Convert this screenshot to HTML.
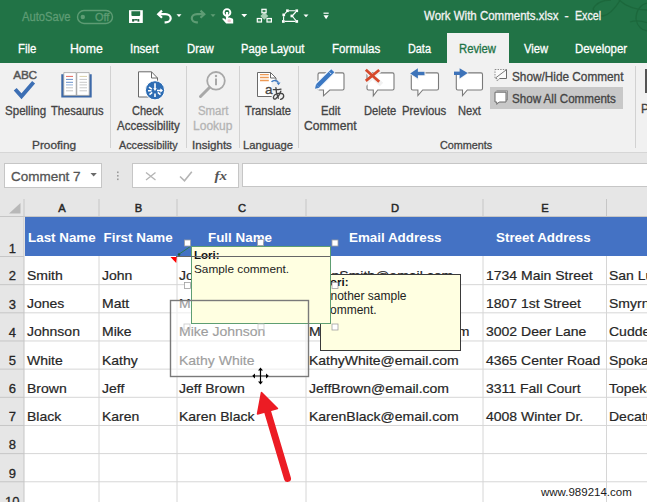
<!DOCTYPE html>
<html><head><meta charset="utf-8">
<style>
html,body{margin:0;padding:0;}
body{width:647px;height:502px;position:relative;overflow:hidden;background:#fff;font-family:"Liberation Sans",sans-serif;}
.a{position:absolute;}
.t{position:absolute;white-space:pre;font-family:"Liberation Sans",sans-serif;}
svg{position:absolute;left:0;top:0;overflow:visible;}
</style></head><body>
<!-- green title/tab bar -->
<div class="a" style="left:0;top:0;width:647px;height:63px;background:#217346;"></div>
<div class="a" style="left:447px;top:33px;width:62px;height:30px;background:#f1f1f1;"></div>
<!-- ribbon -->
<div class="a" style="left:0;top:63px;width:647px;height:89px;background:#f1f1f1;"></div>
<div class="a" style="left:0;top:152px;width:647px;height:64px;background:#e6e6e6;"></div>
<div class="a" style="left:0;top:152px;width:647px;height:1px;background:#d6d6d6;"></div>
<!-- group separators -->
<div class="a" style="left:110px;top:66px;width:1px;height:82px;background:#d2d2d2;"></div>
<div class="a" style="left:186px;top:66px;width:1px;height:82px;background:#d2d2d2;"></div>
<div class="a" style="left:239px;top:66px;width:1px;height:82px;background:#d2d2d2;"></div>
<div class="a" style="left:298px;top:66px;width:1px;height:82px;background:#d2d2d2;"></div>
<div class="a" style="left:635px;top:66px;width:1px;height:82px;background:#d2d2d2;"></div>
<!-- show all comments highlight -->
<div class="a" style="left:490px;top:87px;width:133px;height:22px;background:#c8c8c8;"></div>
<!-- formula bar -->
<div class="a" style="left:4px;top:163px;width:98px;height:25px;background:#fff;border:1px solid #c6c6c6;box-sizing:border-box;"></div>
<div class="a" style="left:132px;top:163px;width:107px;height:25px;background:#fff;border:1px solid #c6c6c6;box-sizing:border-box;"></div>
<div class="a" style="left:242px;top:163px;width:410px;height:24px;background:#fff;border:1px solid #c6c6c6;box-sizing:border-box;"></div>
<!-- grid -->
<div class="a" style="left:24px;top:216px;width:623px;height:286px;background:#fff;"></div>
<div class="a" style="left:0;top:216px;width:24px;height:286px;background:#e6e6e6;"></div>
<div class="a" style="left:24.5px;top:216.5px;width:622.5px;height:39.8px;background:#4472c4;"></div>
<svg width="647" height="502">
<g stroke="#d6d6d6" stroke-width="1" fill="none">
<path d="M24 284.66H647 M24 312.82H647 M24 340.98H647 M24 369.14H647 M24 397.30H647 M24 425.46H647 M24 453.62H647 M24 481.78H647"/>
<path d="M99 256V502 M177 256V502 M306 256V502 M483 256V502 M606.5 256V502"/>
</g>
<g stroke="#c6c6c6" stroke-width="1" fill="none">
<path d="M0 256.50H24 M0 284.66H24 M0 312.82H24 M0 340.98H24 M0 369.14H24 M0 397.30H24 M0 425.46H24 M0 453.62H24 M0 481.78H24"/>
<path d="M24 199V502"/>
<path d="M99 199V216 M177 199V216 M306 199V216 M483 199V216 M606.5 199V216"/>
<path d="M0 216.5H647"/>
</g>
<path d="M9 213.5H20.5V203Z" fill="#b8b8b8"/>
</svg>
<svg width="647" height="502">
<!-- swirls -->
<g fill="none" stroke="#1c683c" stroke-width="1.3">
<path d="M593 9C596 3 603 0 611 0"/>
<path d="M593 9C595 13 599 16 603 16C610 15 616 7 621 -1"/>
<path d="M636 19C636 10 641 4 648 3"/>
<path d="M636 19C637 26 642 31 648 31"/>
<path d="M618 -1C626 7 636 10 648 10"/>
<path d="M630 22C636 20 642 21 648 23"/>
</g>
<!-- autosave toggle -->
<rect x="77.5" y="10.5" width="35" height="13" rx="6.5" fill="none" stroke="#5e9c74" stroke-width="1.4"/>
<circle cx="82.8" cy="17" r="2.2" fill="#5e9c74"/>
<!-- save -->
<rect x="129" y="10.2" width="13.8" height="12.8" fill="#fff"/>
<path d="M131.4 11.2H140.2V15.1Q140.2 16.1 139.2 16.1H132.4Q131.4 16.1 131.4 15.1Z" fill="#217346"/>
<rect x="132.1" y="19.1" width="2.1" height="2.5" fill="#1a5c38"/>
<rect x="134.2" y="19.1" width="3.3" height="1.4" fill="#1a5c38"/>
<rect x="137.5" y="19.1" width="1.8" height="2.5" fill="#1a5c38"/>
<!-- undo -->
<path d="M162 10.6L158.2 14.2L162 17.8" fill="none" stroke="#fff" stroke-width="2.2"/>
<path d="M158.8 14.2H165.5C168.6 14.2 170.7 16.2 170.7 18.3C170.7 20.5 168.6 22.3 165.8 22.3H164.6" fill="none" stroke="#fff" stroke-width="2.2"/>
<path d="M176.5 14.3H181.5L179 17.1Z" fill="#fff"/>
<!-- redo (disabled) -->
<path d="M200.5 10.6L204.3 14.2L200.5 17.8" fill="none" stroke="#5e9c74" stroke-width="2.2"/>
<path d="M203.7 14.2H197C193.9 14.2 191.8 16.2 191.8 18.3C191.8 20.5 193.9 22.3 196.7 22.3H197.9" fill="none" stroke="#5e9c74" stroke-width="2.2"/>
<path d="M210.5 14.3H215.5L213 17.1Z" fill="#5e9c74"/>
<!-- touch -->
<circle cx="227" cy="12.5" r="3.4" fill="none" stroke="#fff" stroke-width="1.9"/>
<rect x="225.9" y="12" width="2.3" height="8" fill="#fff"/>
<path d="M222 18.8Q223 17.7 224.4 18.4L226 19.8V18.2L229.5 17.6L232.4 18.6Q233.2 19 233.2 20V23.6H226.2Z" fill="#fff"/>
<ellipse cx="229.2" cy="20.8" rx="1.8" ry="1.5" fill="#f0c4cf"/>
<path d="M241.3 14H247.2L244.25 17.2Z" fill="#fff"/>
<!-- hierarchy -->
<path d="M264.3 12.2L268.3 16L264.3 19.8L260.3 16Z" fill="#a9cfb5"/>
<rect x="261.9" y="9.3" width="4.2" height="3.5" fill="#3e8a5c" stroke="#fff" stroke-width="1.2"/>
<rect x="257.3" y="18.5" width="4.2" height="3.5" fill="#3e8a5c" stroke="#fff" stroke-width="1.2"/>
<rect x="267" y="18.5" width="4.4" height="3.5" fill="#3e8a5c" stroke="#fff" stroke-width="1.2"/>
<!-- shapes -->
<g fill="#fff">
<rect x="282.4" y="13.5" width="2.7" height="2.7"/><rect x="286.1" y="9.4" width="2.7" height="2.7"/>
<rect x="295.4" y="9.4" width="2.7" height="2.7"/><rect x="290.5" y="14.6" width="2.9" height="2.7"/>
<rect x="282" y="20.1" width="2.7" height="2.7"/><rect x="295.4" y="20.1" width="2.7" height="2.7"/>
</g>
<g stroke="#fff" stroke-width="1.1" fill="none">
<path d="M288.8 10.7H295.4 M284.9 13.6L286.6 11.9 M293 15L295.8 12 M293 17L295.8 20.3 M284.7 21.4H295.4 M283.6 16.2V20"/>
</g>
<path d="M303.5 14.5H308.5L306 17.3Z" fill="#fff"/>
<!-- customize -->
<path d="M323.5 13.2H328.7" stroke="#fff" stroke-width="1.2"/>
<path d="M323.5 15.2H328.7L326.1 19.2Z" fill="#fff"/>
</svg>
<svg width="647" height="502">
<!-- spelling ABC + check -->
<text x="13.2" y="79" font-family="Liberation Sans" font-size="11.8" fill="#555" stroke="#555" stroke-width="0.45" textLength="23.9" lengthAdjust="spacing">ABC</text>
<path d="M15.2 89.2L21.5 96.3L33.6 82.2" fill="none" stroke="#3d6fb4" stroke-width="3.9" stroke-linejoin="miter"/>
<!-- thesaurus book -->
<path d="M61.3 74.2H63.8V95.2H89.2V74.2H91.7V97.6H61.3Z" fill="#3d69a8"/>
<path d="M63.8 72.6H76.2V95.4H63.8Z" fill="#fff" stroke="#9a9a9a" stroke-width="0.7"/>
<path d="M76.8 72.6H89.2V95.4H76.8Z" fill="#fff" stroke="#9a9a9a" stroke-width="0.7"/>
<path d="M76.5 73V95.5" stroke="#a8a8a8" stroke-width="0.8"/>
<g stroke-width="1">
<path d="M66 76.4H73" stroke="#e46a5e"/>
<path d="M66 79.4H73 M66 82.3H73" stroke="#6a90c8"/>
<path d="M66 84.9H73" stroke="#8fb0dc"/>
<path d="M66 87.8H73 M66 90.8H73" stroke="#c4c4c4"/>
<path d="M79.5 76.4H87" stroke="#d8cfa8"/>
<path d="M79.5 79.4H87 M79.5 82.3H87 M79.5 84.9H87 M79.5 87.8H87 M79.5 90.8H87" stroke="#c8c8c8"/>
</g>
<!-- check accessibility doc -->
<path d="M138.5 71.8H151.5L157.5 78V97H138.5Z" fill="#fff" stroke="#6a6a6a" stroke-width="1"/>
<path d="M151.5 71.8V78H157.5" fill="none" stroke="#6a6a6a" stroke-width="1"/>
<circle cx="155" cy="90.3" r="9.6" fill="#2e6db4" stroke="#fff" stroke-width="1"/>
<g stroke="#fff" stroke-width="1.6" fill="none">
<path d="M155 83.2V89 M149 87.2L151.8 89.2 M149.5 94.6L152.2 92.4 M155 97V93.6 M160.5 94.6L157.8 92.4 M148 90.8H151.5 M157 90.5H161.5"/>
</g>
<path d="M153.2 88.3L155 91L156.8 88.3Z M160.3 88.3L163 90.5L160.3 92.7Z" fill="#fff"/>
<!-- smart lookup -->
<circle cx="216" cy="80.8" r="8.8" fill="#f4f4f4" stroke="#a8a8a8" stroke-width="1.8"/>
<circle cx="216" cy="76" r="1.2" fill="#a8a8a8"/>
<path d="M216 78.6V85.3" stroke="#a8a8a8" stroke-width="2"/>
<path d="M209.5 87.5L200.5 96.5" stroke="#a8a8a8" stroke-width="3" stroke-linecap="round"/>
<!-- translate -->
<path d="M257.5 72.5H270.5L276 78V96.5H257.5Z" fill="#fff" stroke="#6a6a6a" stroke-width="1"/>
<path d="M270.5 72.5V78H276" fill="none" stroke="#6a6a6a" stroke-width="1"/>
<path d="M260 74.6H268.8 M260 77.5H268.8 M260 80.5H268.8" stroke="#ee9a55" stroke-width="1.4"/>
<rect x="271.6" y="81.5" width="18" height="20" fill="#f1f1f1"/>
<path d="M271.5 81.8C273.5 79.8 277 79.8 278.5 82.5" fill="none" stroke="#3f7ac2" stroke-width="1.5"/>
<path d="M276.5 82.5H280.5L278.5 85.3Z" fill="#3f7ac2"/>
<text x="265" y="93.8" font-family="Liberation Sans" font-size="13.5" fill="#444" stroke="#444" stroke-width="0.3">a</text>
<g fill="none" stroke="#444" stroke-width="1.35" stroke-linecap="round">
<path d="M273.3 89.6Q277 89.9 281 89.1"/>
<path d="M275.9 87.6Q276 93.5 278.3 98.2"/>
<path d="M280.8 91.2Q279.5 95.5 276 98.6Q273.7 99.9 273.4 97.6Q273.6 94.2 278.4 93.3Q283.7 92.8 283.7 96Q283.6 98.6 280.6 99.4"/>
</g>
<!-- edit comment -->
<path d="M319.5 72.9H342.5Q344 72.9 344 74.4V88.5Q344 90 342.5 90H329.8L323.5 95.8V90H319.5Q318 90 318 88.5V74.4Q318 72.9 319.5 72.9Z" fill="#fff" stroke="#7a7a7a" stroke-width="1.1"/>
<path d="M316 87.5L333 70.5" stroke="#f4f8fd" stroke-width="7" stroke-linecap="butt"/>
<path d="M317.6 85.9L332.8 70.7" stroke="#3b78c3" stroke-width="4.4"/>
<path d="M315 88.7L316 84.3L319.4 87.7Z" fill="#3b78c3"/>
<path d="M329.6 72.4L331.2 74" stroke="#e8f0fa" stroke-width="1"/>
<!-- delete -->
<path d="M368.5 72.9H392.5Q394 72.9 394 74.4V88.5Q394 90 392.5 90H377.7L373.3 95.8V90H368.5Q367 90 367 88.5V74.4Q367 72.9 368.5 72.9Z" fill="#fff" stroke="#7a7a7a" stroke-width="1.1"/>
<path d="M364 68.5L381.5 84.5" stroke="#f1f1f1" stroke-width="5"/>
<path d="M381.5 68.5L364 84.5" stroke="#f1f1f1" stroke-width="5"/>
<path d="M365.8 69.8L379.2 81.8 M379.2 70L365.8 80.8" stroke="#d6492b" stroke-width="2.8"/>
<!-- previous -->
<path d="M412.8 72.9H437Q438.5 72.9 438.5 74.4V88.5Q438.5 90 437 90H422.7L417.9 95.6V90H412.8Q411.3 90 411.3 88.5V74.4Q411.3 72.9 412.8 72.9Z" fill="#fff" stroke="#7a7a7a" stroke-width="1.1"/>
<path d="M409 73.5L418.5 66.5V80.5Z" fill="#f1f1f1"/>
<path d="M413 71H425.5V76H413Z" fill="#f1f1f1"/>
<path d="M413.5 73.5H424.5" stroke="#3d73b9" stroke-width="3.4"/>
<path d="M410.2 73.5L417.9 68.3V78.6Z" fill="#3d73b9"/>
<!-- next -->
<path d="M457.8 72.9H481Q482.5 72.9 482.5 74.4V88.5Q482.5 90 481 90H467.3L462.5 95.6V90H457.8Q456.3 90 456.3 88.5V74.4Q456.3 72.9 457.8 72.9Z" fill="#fff" stroke="#7a7a7a" stroke-width="1.1"/>
<path d="M468.8 73.1L459 66.5V80Z" fill="#f1f1f1"/>
<path d="M454 73.3H463.5" stroke="#3d73b9" stroke-width="3.4"/>
<path d="M467.7 73.1L459.6 68.3V78.6Z" fill="#3d73b9"/>
<!-- show/hide -->
<path d="M495 69.5H506.5V78.5H499.5L497.2 81.2V78.5H495Z" fill="#fafafa" stroke="#8a8a8a" stroke-width="1" stroke-dasharray="1.4 1.2"/>
<path d="M495.5 78L506 70" stroke="#7a7a7a" stroke-width="1"/>
<path d="M506.5 69.5V78.5H499.5" fill="none" stroke="#6a6a6a" stroke-width="1"/>
<!-- show all -->
<path d="M496.5 90.8H507.5V100H496.5" fill="none" stroke="#8a8a8a" stroke-width="0.9"/>
<path d="M495 92.2H506V102H499.2L496.8 104.4V102H495Z" fill="#fff" stroke="#6a6a6a" stroke-width="1"/>
<!-- partial far right -->
<rect x="645" y="69" width="2" height="24" fill="#555"/>
<!-- formula bar icons -->
<path d="M90.5 173H96.8L93.65 176.6Z" fill="#6a6a6a"/>
<g fill="#9a9a9a"><rect x="117" y="171.5" width="1.6" height="1.6"/><rect x="117" y="175" width="1.6" height="1.6"/><rect x="117" y="178.5" width="1.6" height="1.6"/></g>
<path d="M146 172.5L155.5 180 M155.5 172.5L146 180" stroke="#b4b4b4" stroke-width="1.3"/>
<path d="M180 176.5L184.5 180.8L191.8 171.8" fill="none" stroke="#b4b4b4" stroke-width="1.6"/>
<text x="214.5" y="179.8" font-family="Liberation Serif" font-style="italic" font-weight="700" font-size="13" fill="#555" textLength="12.5" lengthAdjust="spacingAndGlyphs">fx</text>
</svg>
<div class="t" style="left:26.8px;top:269.07px;font-size:13.5px;line-height:13.5px;font-weight:400;color:#262626;-webkit-text-stroke:0.2px #262626;transform:scaleX(1.037);transform-origin:0 0;">Smith</div>
<div class="t" style="left:101.8px;top:269.07px;font-size:13.5px;line-height:13.5px;font-weight:400;color:#262626;-webkit-text-stroke:0.2px #262626;transform:scaleX(1.037);transform-origin:0 0;">John</div>
<div class="t" style="left:179.3px;top:269.07px;font-size:13.5px;line-height:13.5px;font-weight:400;color:#262626;-webkit-text-stroke:0.2px #262626;transform:scaleX(1.037);transform-origin:0 0;">John Smith</div>
<div class="t" style="left:308.8px;top:269.07px;font-size:13.5px;line-height:13.5px;font-weight:400;color:#262626;-webkit-text-stroke:0.2px #262626;transform:scaleX(1.037);transform-origin:0 0;">JohnSmith@email.com</div>
<div class="t" style="left:486px;top:269.07px;font-size:13.5px;line-height:13.5px;font-weight:400;color:#262626;-webkit-text-stroke:0.2px #262626;transform:scaleX(1.037);transform-origin:0 0;">1734 Main Street</div>
<div class="t" style="left:609px;top:269.07px;font-size:13.5px;line-height:13.5px;font-weight:400;color:#262626;-webkit-text-stroke:0.2px #262626;transform:scaleX(1.037);transform-origin:0 0;">San Luis</div>
<div class="t" style="left:26.8px;top:297.23px;font-size:13.5px;line-height:13.5px;font-weight:400;color:#262626;-webkit-text-stroke:0.2px #262626;transform:scaleX(1.037);transform-origin:0 0;">Jones</div>
<div class="t" style="left:101.8px;top:297.23px;font-size:13.5px;line-height:13.5px;font-weight:400;color:#262626;-webkit-text-stroke:0.2px #262626;transform:scaleX(1.037);transform-origin:0 0;">Matt</div>
<div class="t" style="left:179.3px;top:297.23px;font-size:13.5px;line-height:13.5px;font-weight:400;color:#262626;-webkit-text-stroke:0.2px #262626;transform:scaleX(1.037);transform-origin:0 0;">Matt Jones</div>
<div class="t" style="left:308.8px;top:297.23px;font-size:13.5px;line-height:13.5px;font-weight:400;color:#262626;-webkit-text-stroke:0.2px #262626;transform:scaleX(1.037);transform-origin:0 0;">MattJones@email.com</div>
<div class="t" style="left:486px;top:297.23px;font-size:13.5px;line-height:13.5px;font-weight:400;color:#262626;-webkit-text-stroke:0.2px #262626;transform:scaleX(1.037);transform-origin:0 0;">1807 1st Street</div>
<div class="t" style="left:609px;top:297.23px;font-size:13.5px;line-height:13.5px;font-weight:400;color:#262626;-webkit-text-stroke:0.2px #262626;transform:scaleX(1.037);transform-origin:0 0;">Smyrna</div>
<div class="t" style="left:26.8px;top:325.39px;font-size:13.5px;line-height:13.5px;font-weight:400;color:#262626;-webkit-text-stroke:0.2px #262626;transform:scaleX(1.037);transform-origin:0 0;">Johnson</div>
<div class="t" style="left:101.8px;top:325.39px;font-size:13.5px;line-height:13.5px;font-weight:400;color:#262626;-webkit-text-stroke:0.2px #262626;transform:scaleX(1.037);transform-origin:0 0;">Mike</div>
<div class="t" style="left:179.3px;top:325.39px;font-size:13.5px;line-height:13.5px;font-weight:400;color:#262626;-webkit-text-stroke:0.2px #262626;transform:scaleX(1.037);transform-origin:0 0;">Mike Johnson</div>
<div class="t" style="left:308.8px;top:325.39px;font-size:13.5px;line-height:13.5px;font-weight:400;color:#262626;-webkit-text-stroke:0.2px #262626;transform:scaleX(1.037);transform-origin:0 0;">MikeJohnson@email.com</div>
<div class="t" style="left:486px;top:325.39px;font-size:13.5px;line-height:13.5px;font-weight:400;color:#262626;-webkit-text-stroke:0.2px #262626;transform:scaleX(1.037);transform-origin:0 0;">3002 Deer Lane</div>
<div class="t" style="left:609px;top:325.39px;font-size:13.5px;line-height:13.5px;font-weight:400;color:#262626;-webkit-text-stroke:0.2px #262626;transform:scaleX(1.037);transform-origin:0 0;">Cudderville</div>
<div class="t" style="left:26.8px;top:353.55px;font-size:13.5px;line-height:13.5px;font-weight:400;color:#262626;-webkit-text-stroke:0.2px #262626;transform:scaleX(1.037);transform-origin:0 0;">White</div>
<div class="t" style="left:101.8px;top:353.55px;font-size:13.5px;line-height:13.5px;font-weight:400;color:#262626;-webkit-text-stroke:0.2px #262626;transform:scaleX(1.037);transform-origin:0 0;">Kathy</div>
<div class="t" style="left:179.3px;top:353.55px;font-size:13.5px;line-height:13.5px;font-weight:400;color:#262626;-webkit-text-stroke:0.2px #262626;transform:scaleX(1.037);transform-origin:0 0;">Kathy White</div>
<div class="t" style="left:308.8px;top:353.55px;font-size:13.5px;line-height:13.5px;font-weight:400;color:#262626;-webkit-text-stroke:0.2px #262626;transform:scaleX(1.037);transform-origin:0 0;">KathyWhite@email.com</div>
<div class="t" style="left:486px;top:353.55px;font-size:13.5px;line-height:13.5px;font-weight:400;color:#262626;-webkit-text-stroke:0.2px #262626;transform:scaleX(1.037);transform-origin:0 0;">4365 Center Road</div>
<div class="t" style="left:609px;top:353.55px;font-size:13.5px;line-height:13.5px;font-weight:400;color:#262626;-webkit-text-stroke:0.2px #262626;transform:scaleX(1.037);transform-origin:0 0;">Spokane</div>
<div class="t" style="left:26.8px;top:381.71px;font-size:13.5px;line-height:13.5px;font-weight:400;color:#262626;-webkit-text-stroke:0.2px #262626;transform:scaleX(1.037);transform-origin:0 0;">Brown</div>
<div class="t" style="left:101.8px;top:381.71px;font-size:13.5px;line-height:13.5px;font-weight:400;color:#262626;-webkit-text-stroke:0.2px #262626;transform:scaleX(1.037);transform-origin:0 0;">Jeff</div>
<div class="t" style="left:179.3px;top:381.71px;font-size:13.5px;line-height:13.5px;font-weight:400;color:#262626;-webkit-text-stroke:0.2px #262626;transform:scaleX(1.037);transform-origin:0 0;">Jeff Brown</div>
<div class="t" style="left:308.8px;top:381.71px;font-size:13.5px;line-height:13.5px;font-weight:400;color:#262626;-webkit-text-stroke:0.2px #262626;transform:scaleX(1.037);transform-origin:0 0;">JeffBrown@email.com</div>
<div class="t" style="left:486px;top:381.71px;font-size:13.5px;line-height:13.5px;font-weight:400;color:#262626;-webkit-text-stroke:0.2px #262626;transform:scaleX(1.037);transform-origin:0 0;">3311 Fall Court</div>
<div class="t" style="left:609px;top:381.71px;font-size:13.5px;line-height:13.5px;font-weight:400;color:#262626;-webkit-text-stroke:0.2px #262626;transform:scaleX(1.037);transform-origin:0 0;">Topeka</div>
<div class="t" style="left:26.8px;top:409.87px;font-size:13.5px;line-height:13.5px;font-weight:400;color:#262626;-webkit-text-stroke:0.2px #262626;transform:scaleX(1.037);transform-origin:0 0;">Black</div>
<div class="t" style="left:101.8px;top:409.87px;font-size:13.5px;line-height:13.5px;font-weight:400;color:#262626;-webkit-text-stroke:0.2px #262626;transform:scaleX(1.037);transform-origin:0 0;">Karen</div>
<div class="t" style="left:179.3px;top:409.87px;font-size:13.5px;line-height:13.5px;font-weight:400;color:#262626;-webkit-text-stroke:0.2px #262626;transform:scaleX(1.037);transform-origin:0 0;">Karen Black</div>
<div class="t" style="left:308.8px;top:409.87px;font-size:13.5px;line-height:13.5px;font-weight:400;color:#262626;-webkit-text-stroke:0.2px #262626;transform:scaleX(1.037);transform-origin:0 0;">KarenBlack@email.com</div>
<div class="t" style="left:486px;top:409.87px;font-size:13.5px;line-height:13.5px;font-weight:400;color:#262626;-webkit-text-stroke:0.2px #262626;transform:scaleX(1.037);transform-origin:0 0;">4008 Winter Dr.</div>
<div class="t" style="left:609px;top:409.87px;font-size:13.5px;line-height:13.5px;font-weight:400;color:#262626;-webkit-text-stroke:0.2px #262626;transform:scaleX(1.037);transform-origin:0 0;">Decatur</div>
<div class="t" style="left:0.3px;top:241.99px;font-size:13px;line-height:13px;font-weight:400;color:#262626;width:24px;text-align:center;-webkit-text-stroke:0.3px #262626;">1</div>
<div class="t" style="left:0.3px;top:269.49px;font-size:13px;line-height:13px;font-weight:400;color:#262626;width:24px;text-align:center;-webkit-text-stroke:0.3px #262626;">2</div>
<div class="t" style="left:0.3px;top:297.65px;font-size:13px;line-height:13px;font-weight:400;color:#262626;width:24px;text-align:center;-webkit-text-stroke:0.3px #262626;">3</div>
<div class="t" style="left:0.3px;top:325.81px;font-size:13px;line-height:13px;font-weight:400;color:#262626;width:24px;text-align:center;-webkit-text-stroke:0.3px #262626;">4</div>
<div class="t" style="left:0.3px;top:353.97px;font-size:13px;line-height:13px;font-weight:400;color:#262626;width:24px;text-align:center;-webkit-text-stroke:0.3px #262626;">5</div>
<div class="t" style="left:0.3px;top:382.13px;font-size:13px;line-height:13px;font-weight:400;color:#262626;width:24px;text-align:center;-webkit-text-stroke:0.3px #262626;">6</div>
<div class="t" style="left:0.3px;top:410.29px;font-size:13px;line-height:13px;font-weight:400;color:#262626;width:24px;text-align:center;-webkit-text-stroke:0.3px #262626;">7</div>
<div class="t" style="left:0.3px;top:438.45px;font-size:13px;line-height:13px;font-weight:400;color:#262626;width:24px;text-align:center;-webkit-text-stroke:0.3px #262626;">8</div>
<div class="t" style="left:0.3px;top:466.61px;font-size:13px;line-height:13px;font-weight:400;color:#262626;width:24px;text-align:center;-webkit-text-stroke:0.3px #262626;">9</div>
<div class="t" style="left:0.3px;top:494.77px;font-size:13px;line-height:13px;font-weight:400;color:#262626;width:24px;text-align:center;-webkit-text-stroke:0.3px #262626;">10</div>
<div class="t" style="left:42.0px;top:203.12px;font-size:11.2px;line-height:11.2px;font-weight:400;color:#262626;width:40px;text-align:center;-webkit-text-stroke:0.45px #262626;">A</div>
<div class="t" style="left:118.5px;top:203.12px;font-size:11.2px;line-height:11.2px;font-weight:400;color:#262626;width:40px;text-align:center;-webkit-text-stroke:0.45px #262626;">B</div>
<div class="t" style="left:222.0px;top:203.12px;font-size:11.2px;line-height:11.2px;font-weight:400;color:#262626;width:40px;text-align:center;-webkit-text-stroke:0.45px #262626;">C</div>
<div class="t" style="left:375.0px;top:203.12px;font-size:11.2px;line-height:11.2px;font-weight:400;color:#262626;width:40px;text-align:center;-webkit-text-stroke:0.45px #262626;">D</div>
<div class="t" style="left:525.0px;top:203.12px;font-size:11.2px;line-height:11.2px;font-weight:400;color:#262626;width:40px;text-align:center;-webkit-text-stroke:0.45px #262626;">E</div>
<div class="t" style="left:28px;top:230.85px;font-size:13.4px;line-height:13.4px;font-weight:700;color:#ffffff;">Last Name</div>
<div class="t" style="left:103.5px;top:230.85px;font-size:13.4px;line-height:13.4px;font-weight:700;color:#ffffff;">First Name</div>
<div class="t" style="left:208px;top:230.85px;font-size:13.4px;line-height:13.4px;font-weight:700;color:#ffffff;">Full Name</div>
<div class="t" style="left:349px;top:230.85px;font-size:13.4px;line-height:13.4px;font-weight:700;color:#ffffff;">Email Address</div>
<div class="t" style="left:496px;top:230.85px;font-size:13.4px;line-height:13.4px;font-weight:700;color:#ffffff;">Street Address</div>
<!-- ghost fade -->
<div class="a" style="left:171px;top:301px;width:137px;height:75px;background:rgba(255,255,255,0.55);"></div>
<!-- comment 2 -->
<div class="a" style="left:319.5px;top:273.5px;width:141px;height:77px;background:#ffffe1;border:1.5px solid #3a3a3a;box-sizing:border-box;"></div>
<div class="t" style="left:323px;top:276.2px;font-size:11.5px;line-height:12px;font-weight:700;color:#111;">Lori:</div>
<div class="t" style="left:322.5px;top:290.1px;font-size:12px;line-height:12px;color:#222;">Another sample</div>
<div class="t" style="left:324px;top:304.1px;font-size:12px;line-height:12px;color:#222;">comment.</div>
<!-- comment 1 -->
<div class="a" style="left:190.5px;top:246px;width:140.5px;height:77.5px;background:#ffffe1;border:1px solid #5e9e72;box-sizing:border-box;"></div>
<div class="t" style="left:194px;top:248.6px;font-size:11.5px;line-height:12px;font-weight:700;color:#111;">Lori:</div>
<div class="t" style="left:194px;top:263.2px;font-size:11.8px;line-height:12px;color:#222;">Sample comment.</div>
<svg width="647" height="502">
<path d="M176 256.5H330" stroke="#666" stroke-width="1"/>
<path d="M190.3 246.5L178.5 254.5" stroke="#2b7a4b" stroke-width="1"/>
<circle cx="179" cy="254.5" r="1.3" fill="#1f5a35"/>
<path d="M170.5 257H176.8L176.2 263Z" fill="#ff0000"/>
<rect x="170.5" y="300.5" width="138" height="76" fill="none" stroke="#7a7a7a" stroke-width="1.4"/>
<g fill="#fff" stroke="#a0a0a0" stroke-width="0.8">
<rect x="184.5" y="240" width="6" height="6"/>
<rect x="257.5" y="239.5" width="6" height="6"/>
<rect x="332" y="240" width="6" height="6"/>
<rect x="184.5" y="282.5" width="6" height="6"/>
<rect x="332" y="282.5" width="6" height="6"/>
<rect x="332" y="324" width="6" height="6"/>
</g>
<g fill="none" stroke="#c8c8c8" stroke-width="0.8">
<rect x="184" y="324" width="6" height="6"/>
<rect x="258" y="324" width="6" height="6"/>
</g>
<!-- move cursor -->
<g stroke="#fff" stroke-width="3" fill="none"><path d="M252.5 376H268.5 M260.5 368V384"/></g>
<g stroke="#000" stroke-width="1.2" fill="none"><path d="M254 376H267 M260.5 369.5V382.5"/></g>
<g fill="#000"><path d="M260.5 367.5L258 370.5H263Z M260.5 384.5L258 381.5H263Z M252 376L255 373.5V378.5Z M269 376L266 373.5V378.5Z"/></g>
<!-- red arrow -->
<path d="M287.5 478.5L266.8 409" stroke="#ec1c24" stroke-width="7" stroke-linecap="round"/>
<path d="M261.5 392.5L257.5 414L277.5 408.5Z" fill="#ec1c24" stroke="#ec1c24" stroke-width="1.5" stroke-linejoin="round"/>
</svg>
<div class="t" style="left:541px;top:486.9px;font-size:11.5px;line-height:11.5px;color:#1a1a1a;text-shadow:0 0 2px #fff;">www.989214.com</div>

<div class="t" style="left:21.80px;top:11.22px;font-size:12.50px;line-height:12.50px;font-weight:400;color:#5e9c74;-webkit-text-stroke:0.3px #5e9c74;transform:scaleX(0.8967);transform-origin:0 0;">AutoSave</div>
<div class="t" style="left:94.56px;top:11.56px;font-size:11.50px;line-height:11.50px;font-weight:400;color:#5e9c74;-webkit-text-stroke:0.3px #5e9c74;transform:scaleX(0.9529);transform-origin:0 0;">Off</div>
<div class="t" style="left:424.30px;top:9.92px;font-size:12.50px;line-height:12.50px;font-weight:400;color:#f4f4f4;-webkit-text-stroke:0.3px #f4f4f4;transform:scaleX(0.9187);transform-origin:0 0;">Work With Comments.xlsx</div>
<div class="t" style="left:564.50px;top:9.92px;font-size:12.50px;line-height:12.50px;font-weight:400;color:#f4f4f4;-webkit-text-stroke:0.3px #f4f4f4;">-</div>
<div class="t" style="left:574.75px;top:9.92px;font-size:12.50px;line-height:12.50px;font-weight:400;color:#f4f4f4;-webkit-text-stroke:0.3px #f4f4f4;transform:scaleX(0.8545);transform-origin:0 0;">Excel</div>
<div class="t" style="left:17.79px;top:42.82px;font-size:12.50px;line-height:12.50px;font-weight:400;color:#ffffff;-webkit-text-stroke:0.3px #ffffff;transform:scaleX(0.9096);transform-origin:0 0;">File</div>
<div class="t" style="left:70.42px;top:42.82px;font-size:12.50px;line-height:12.50px;font-weight:400;color:#ffffff;-webkit-text-stroke:0.3px #ffffff;transform:scaleX(0.9814);transform-origin:0 0;">Home</div>
<div class="t" style="left:129.96px;top:42.82px;font-size:12.50px;line-height:12.50px;font-weight:400;color:#ffffff;-webkit-text-stroke:0.3px #ffffff;transform:scaleX(0.9216);transform-origin:0 0;">Insert</div>
<div class="t" style="left:186.89px;top:42.82px;font-size:12.50px;line-height:12.50px;font-weight:400;color:#ffffff;-webkit-text-stroke:0.3px #ffffff;transform:scaleX(0.9127);transform-origin:0 0;">Draw</div>
<div class="t" style="left:241.10px;top:42.82px;font-size:12.50px;line-height:12.50px;font-weight:400;color:#ffffff;-webkit-text-stroke:0.3px #ffffff;transform:scaleX(0.9014);transform-origin:0 0;">Page Layout</div>
<div class="t" style="left:332.07px;top:42.82px;font-size:12.50px;line-height:12.50px;font-weight:400;color:#ffffff;-webkit-text-stroke:0.3px #ffffff;transform:scaleX(0.9267);transform-origin:0 0;">Formulas</div>
<div class="t" style="left:407.93px;top:42.82px;font-size:12.50px;line-height:12.50px;font-weight:400;color:#ffffff;-webkit-text-stroke:0.3px #ffffff;transform:scaleX(0.8683);transform-origin:0 0;">Data</div>
<div class="t" style="left:523.80px;top:42.82px;font-size:12.50px;line-height:12.50px;font-weight:400;color:#ffffff;-webkit-text-stroke:0.3px #ffffff;transform:scaleX(0.8974);transform-origin:0 0;">View</div>
<div class="t" style="left:575.09px;top:42.82px;font-size:12.50px;line-height:12.50px;font-weight:400;color:#ffffff;-webkit-text-stroke:0.3px #ffffff;transform:scaleX(0.9138);transform-origin:0 0;">Developer</div>
<div class="t" style="left:458.90px;top:42.82px;font-size:12.50px;line-height:12.50px;font-weight:400;color:#217346;-webkit-text-stroke:0.3px #217346;transform:scaleX(0.9031);transform-origin:0 0;">Review</div>
<div class="t" style="left:4.54px;top:104.74px;font-size:12.00px;line-height:12.00px;font-weight:400;color:#444444;-webkit-text-stroke:0.3px #444444;transform:scaleX(0.9628);transform-origin:0 0;">Spelling</div>
<div class="t" style="left:50.78px;top:104.74px;font-size:12.00px;line-height:12.00px;font-weight:400;color:#444444;-webkit-text-stroke:0.3px #444444;transform:scaleX(0.9270);transform-origin:0 0;">Thesaurus</div>
<div class="t" style="left:132.35px;top:104.74px;font-size:12.00px;line-height:12.00px;font-weight:400;color:#444444;-webkit-text-stroke:0.3px #444444;transform:scaleX(0.9185);transform-origin:0 0;">Check</div>
<div class="t" style="left:117.00px;top:120.24px;font-size:12.00px;line-height:12.00px;font-weight:400;color:#444444;-webkit-text-stroke:0.3px #444444;transform:scaleX(0.9595);transform-origin:0 0;">Accessibility</div>
<div class="t" style="left:197.54px;top:104.74px;font-size:12.00px;line-height:12.00px;font-weight:400;color:#b4b4b4;-webkit-text-stroke:0.3px #b4b4b4;transform:scaleX(0.9509);transform-origin:0 0;">Smart</div>
<div class="t" style="left:193.04px;top:120.24px;font-size:12.00px;line-height:12.00px;font-weight:400;color:#b4b4b4;-webkit-text-stroke:0.3px #b4b4b4;">Lookup</div>
<div class="t" style="left:245.48px;top:104.74px;font-size:12.00px;line-height:12.00px;font-weight:400;color:#444444;-webkit-text-stroke:0.3px #444444;transform:scaleX(0.9263);transform-origin:0 0;">Translate</div>
<div class="t" style="left:321.11px;top:104.74px;font-size:12.00px;line-height:12.00px;font-weight:400;color:#444444;-webkit-text-stroke:0.3px #444444;transform:scaleX(0.9319);transform-origin:0 0;">Edit</div>
<div class="t" style="left:304.39px;top:120.24px;font-size:12.00px;line-height:12.00px;font-weight:400;color:#444444;-webkit-text-stroke:0.3px #444444;transform:scaleX(1.0109);transform-origin:0 0;">Comment</div>
<div class="t" style="left:363.81px;top:104.74px;font-size:12.00px;line-height:12.00px;font-weight:400;color:#444444;-webkit-text-stroke:0.3px #444444;transform:scaleX(0.9311);transform-origin:0 0;">Delete</div>
<div class="t" style="left:402.09px;top:104.74px;font-size:12.00px;line-height:12.00px;font-weight:400;color:#444444;-webkit-text-stroke:0.3px #444444;transform:scaleX(0.9478);transform-origin:0 0;">Previous</div>
<div class="t" style="left:457.61px;top:104.74px;font-size:12.00px;line-height:12.00px;font-weight:400;color:#444444;-webkit-text-stroke:0.3px #444444;transform:scaleX(0.9267);transform-origin:0 0;">Next</div>
<div class="t" style="left:511.53px;top:71.24px;font-size:12.00px;line-height:12.00px;font-weight:400;color:#444444;-webkit-text-stroke:0.3px #444444;transform:scaleX(0.9830);transform-origin:0 0;">Show/Hide Comment</div>
<div class="t" style="left:511.54px;top:93.04px;font-size:12.00px;line-height:12.00px;font-weight:400;color:#444444;-webkit-text-stroke:0.3px #444444;transform:scaleX(0.9674);transform-origin:0 0;">Show All Comments</div>
<div class="t" style="left:31.75px;top:139.56px;font-size:11.50px;line-height:11.50px;font-weight:400;color:#444444;-webkit-text-stroke:0.3px #444444;transform:scaleX(1.0299);transform-origin:0 0;">Proofing</div>
<div class="t" style="left:119.00px;top:139.56px;font-size:11.50px;line-height:11.50px;font-weight:400;color:#444444;-webkit-text-stroke:0.3px #444444;transform:scaleX(0.9373);transform-origin:0 0;">Accessibility</div>
<div class="t" style="left:192.46px;top:139.56px;font-size:11.50px;line-height:11.50px;font-weight:400;color:#444444;-webkit-text-stroke:0.3px #444444;transform:scaleX(1.0065);transform-origin:0 0;">Insights</div>
<div class="t" style="left:242.80px;top:139.56px;font-size:11.50px;line-height:11.50px;font-weight:400;color:#444444;-webkit-text-stroke:0.3px #444444;transform:scaleX(0.9793);transform-origin:0 0;">Language</div>
<div class="t" style="left:440.46px;top:139.56px;font-size:11.50px;line-height:11.50px;font-weight:400;color:#444444;-webkit-text-stroke:0.3px #444444;transform:scaleX(0.9401);transform-origin:0 0;">Comments</div>
<div class="t" style="left:641.04px;top:102.84px;font-size:12.00px;line-height:12.00px;font-weight:400;color:#444444;-webkit-text-stroke:0.3px #444444;">P</div>
<div class="t" style="left:10.83px;top:169.59px;font-size:13.00px;line-height:13.00px;font-weight:400;color:#555;-webkit-text-stroke:0.3px #555;transform:scaleX(1.0358);transform-origin:0 0;">Comment 7</div>
</body></html>
